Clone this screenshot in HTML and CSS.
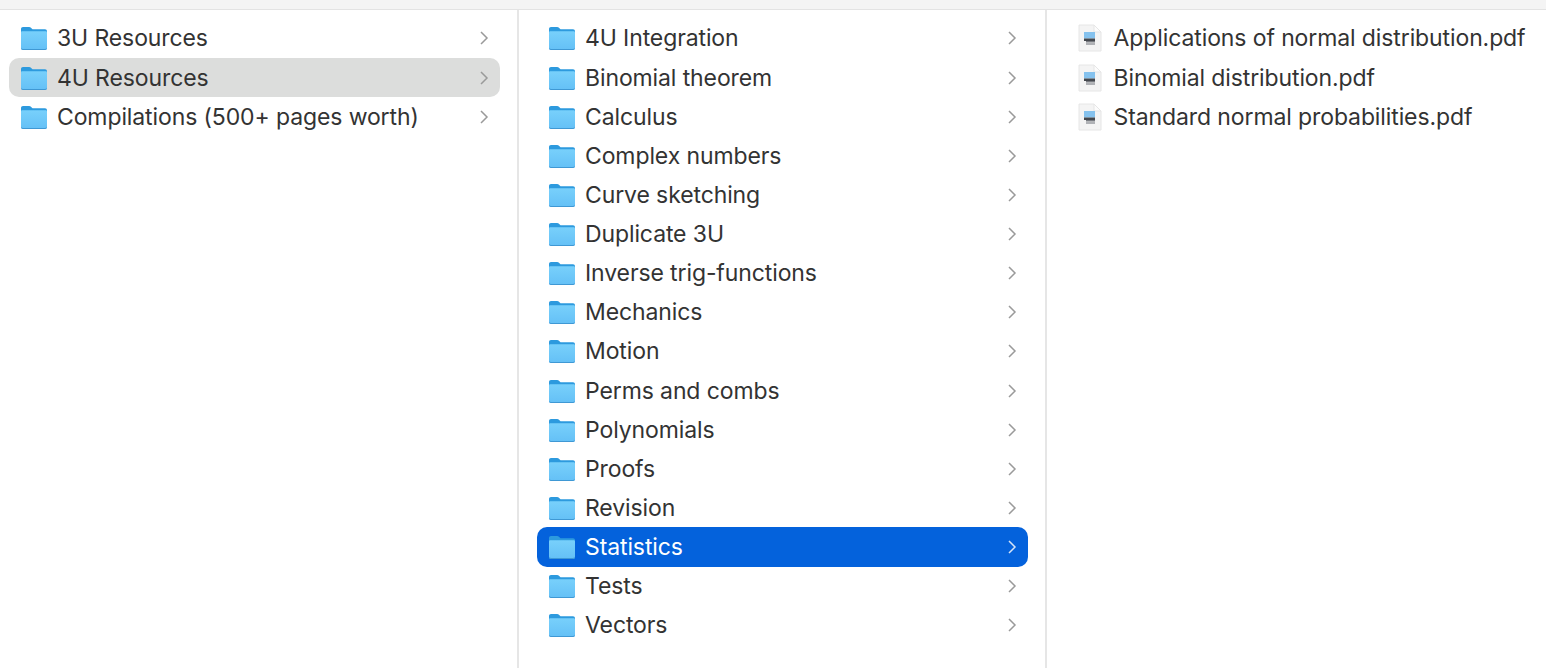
FILE: index.html
```html
<!DOCTYPE html>
<html lang="en">
<head>
  <meta charset="UTF-8" />
  <title>Finder columns</title>
  <link rel="stylesheet" href="styles.css">
</head>
<body>
  <svg class="sprites" width="0" height="0">
    <defs>
      <linearGradient id="folder-front" x1="0" y1="0" x2="0" y2="1">
        <stop offset="0" stop-color="#78d0fb"/>
        <stop offset="1" stop-color="#64c0f6"/>
      </linearGradient>
      <symbol id="folder" viewBox="0 0 28 26">
        <path d="M1 4C1 2.800 1.800 2 3 2H9c1 0 1.600.4 2.200 1l1.300 1.200H25C26.200 4.200 27 5 27 6.200V12H1Z" fill="#2d9ade"/>
        <path d="M1 7.500C1 6.700 1.600 6.200 2.400 6.200H25.600C26.400 6.200 27 6.700 27 7.500V23C27 24.200 26.200 25 25 25H3C1.800 25 1 24.200 1 23Z" fill="url(#folder-front)"/>
        <path d="M1 22.600C1 23.600 1.800 24 3 24H25C26.200 24 27 23.600 27 22.600V23C27 24.200 26.200 25 25 25H3C1.800 25 1 24.200 1 23Z" fill="#3f98d4"/>
      </symbol>
      <symbol id="pdf" viewBox="0 0 24 28">
        <path d="M1 1H16L23 8V27H1Z" fill="#f4f4f4" stroke="#e6e6e6" stroke-width="1"/>
        <path d="M16 1V8H23Z" fill="#fcfcfc" stroke="#e6e6e6" stroke-width="1"/>
        <rect x="6" y="8" width="11" height="6.500" fill="#85c2ee"/>
        <rect x="6" y="14.500" width="11" height="2.500" fill="#44484e"/>
        <rect x="8" y="17" width="9" height="1.500" fill="#777a80"/>
        <rect x="8" y="19" width="9" height="2" fill="#b0b2b6"/>
      </symbol>
      <symbol id="chevron" viewBox="0 0 10 16">
        <path d="M2 2L8 8L2 14" fill="none" stroke="currentColor" stroke-width="1.500"/>
      </symbol>
    </defs>
  </svg>

  <div class="toolbar"></div>

  <main class="columns">
    <section class="column">
      <div class="row"><svg class="folder"><use href="#folder"/></svg><span class="name">3U Resources</span><svg class="chevron"><use href="#chevron"/></svg></div>
      <div class="row row-inactive"><svg class="folder"><use href="#folder"/></svg><span class="name">4U Resources</span><svg class="chevron"><use href="#chevron"/></svg></div>
      <div class="row"><svg class="folder"><use href="#folder"/></svg><span class="name">Compilations (500+ pages worth)</span><svg class="chevron"><use href="#chevron"/></svg></div>
    </section>

    <section class="column">
      <div class="row"><svg class="folder"><use href="#folder"/></svg><span class="name">4U Integration</span><svg class="chevron"><use href="#chevron"/></svg></div>
      <div class="row"><svg class="folder"><use href="#folder"/></svg><span class="name">Binomial theorem</span><svg class="chevron"><use href="#chevron"/></svg></div>
      <div class="row"><svg class="folder"><use href="#folder"/></svg><span class="name">Calculus</span><svg class="chevron"><use href="#chevron"/></svg></div>
      <div class="row"><svg class="folder"><use href="#folder"/></svg><span class="name">Complex numbers</span><svg class="chevron"><use href="#chevron"/></svg></div>
      <div class="row"><svg class="folder"><use href="#folder"/></svg><span class="name">Curve sketching</span><svg class="chevron"><use href="#chevron"/></svg></div>
      <div class="row"><svg class="folder"><use href="#folder"/></svg><span class="name">Duplicate 3U</span><svg class="chevron"><use href="#chevron"/></svg></div>
      <div class="row"><svg class="folder"><use href="#folder"/></svg><span class="name">Inverse trig-functions</span><svg class="chevron"><use href="#chevron"/></svg></div>
      <div class="row"><svg class="folder"><use href="#folder"/></svg><span class="name">Mechanics</span><svg class="chevron"><use href="#chevron"/></svg></div>
      <div class="row"><svg class="folder"><use href="#folder"/></svg><span class="name">Motion</span><svg class="chevron"><use href="#chevron"/></svg></div>
      <div class="row"><svg class="folder"><use href="#folder"/></svg><span class="name">Perms and combs</span><svg class="chevron"><use href="#chevron"/></svg></div>
      <div class="row"><svg class="folder"><use href="#folder"/></svg><span class="name">Polynomials</span><svg class="chevron"><use href="#chevron"/></svg></div>
      <div class="row"><svg class="folder"><use href="#folder"/></svg><span class="name">Proofs</span><svg class="chevron"><use href="#chevron"/></svg></div>
      <div class="row"><svg class="folder"><use href="#folder"/></svg><span class="name">Revision</span><svg class="chevron"><use href="#chevron"/></svg></div>
      <div class="row row-active"><svg class="folder"><use href="#folder"/></svg><span class="name">Statistics</span><svg class="chevron"><use href="#chevron"/></svg></div>
      <div class="row"><svg class="folder"><use href="#folder"/></svg><span class="name">Tests</span><svg class="chevron"><use href="#chevron"/></svg></div>
      <div class="row"><svg class="folder"><use href="#folder"/></svg><span class="name">Vectors</span><svg class="chevron"><use href="#chevron"/></svg></div>
    </section>

    <section class="column">
      <div class="row"><svg class="pdf"><use href="#pdf"/></svg><span class="name">Applications of normal distribution.pdf</span></div>
      <div class="row"><svg class="pdf"><use href="#pdf"/></svg><span class="name">Binomial distribution.pdf</span></div>
      <div class="row"><svg class="pdf"><use href="#pdf"/></svg><span class="name">Standard normal probabilities.pdf</span></div>
    </section>
  </main>
</body>
</html>
```

FILE: styles.css
```css
/* Reset and base styles */
* {
  box-sizing: border-box;
  margin: 0;
  padding: 0;
}

body {
  font-family: Inter, 'Noto Sans', sans-serif;
  background-color: #ffffff;
  color: #333333;
  height: 668px;
  overflow: hidden;
  display: flex;
  flex-direction: column;
}

.sprites {
  display: block;
  height: 0;
}

/* Top strip */
.toolbar {
  height: 10px;
  flex: none;
  background-color: #f4f4f4;
  border-bottom: 1px solid #e3e3e3;
}

/* Columns */
.columns {
  flex: 1;
  display: grid;
  grid-template-columns: 519px 528px 499px;
}

.column {
  padding: 8.85px 17px 0 18px;
  border-right: 2px solid #e6e6e6;
}

.column:first-child {
  padding-left: 9px;
}

.column:last-child {
  border-right: none;
}

.row {
  display: flex;
  align-items: center;
  height: 39.13px;
  padding: 0 11px 0 11px;
  border-radius: 10px;
  font-size: 23px;
  letter-spacing: -0.11px;
  white-space: nowrap;
}

.row-inactive {
  background-color: #dcdddc;
}

.row-active {
  background-color: #0462dc;
  color: #ffffff;
}

.folder {
  width: 28px;
  height: 26px;
  flex: none;
}

.pdf {
  width: 24px;
  height: 28px;
  flex: none;
  margin-left: 2px;
  margin-right: 11.6px;
}

.name {
  margin-left: 9px;
  flex: 1;
}

.pdf + .name {
  margin-left: 0;
}

.chevron {
  width: 10px;
  height: 16px;
  flex: none;
  color: #9a9a9a;
}

.row-active .chevron {
  color: #d5e4f8;
}
```
